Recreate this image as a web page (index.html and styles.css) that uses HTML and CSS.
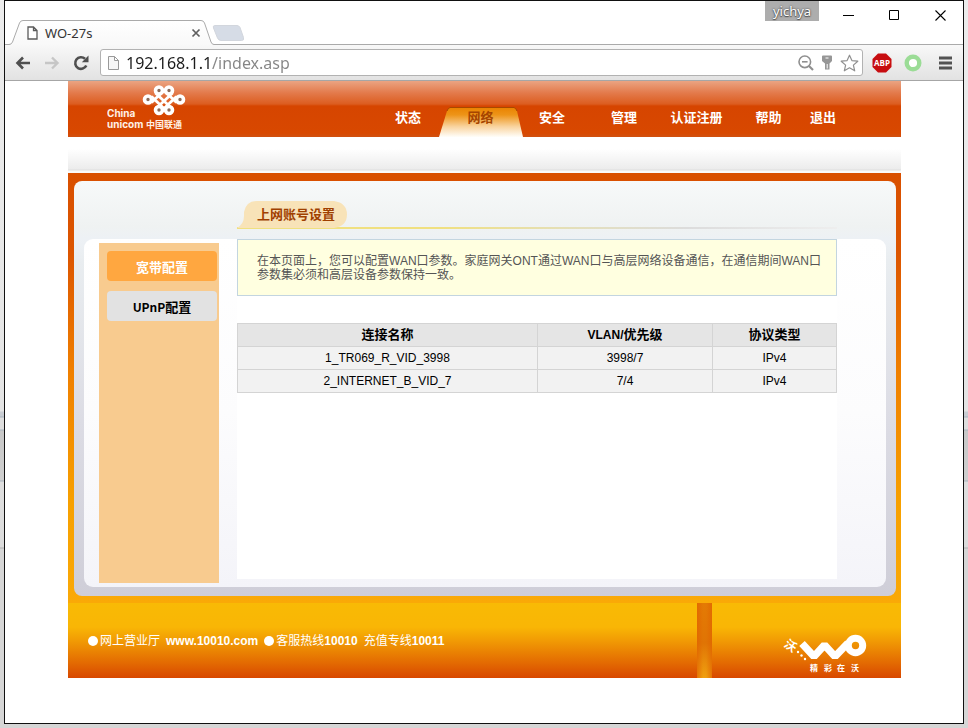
FILE: index.html
```html
<!DOCTYPE html>
<html lang="zh-CN">
<head>
<meta charset="utf-8">
<title>WO-27s</title>
<link rel="stylesheet" href="styles.css">
</head>
<body>
<div class="window">
  <div class="tabstrip">
    <div class="tab">
      <svg class="tab-shape" width="209" height="25" viewBox="0 0 209 25" aria-hidden="true">
        <defs><linearGradient id="tabfill" x1="0" y1="0" x2="0" y2="1"><stop offset="0" stop-color="#fff"/><stop offset="1" stop-color="#f8f8f8"/></linearGradient></defs>
        <path d="M0 24.5H4Q6.500 24.500 7.500 22L14.500 3Q15.500 .5 18 .5H196Q198.500 .5 199.500 3L206 22Q207 24.500 209 24.500V26H0Z" fill="url(#tabfill)"/>
        <path d="M0 24.500H4Q6.500 24.500 7.500 22L14.500 3Q15.500 .5 18 .5H196Q198.500 .5 199.500 3L206 22Q207 24.500 209 24.500" fill="none" stroke="#aaa"/>
      </svg>
      <svg class="tab-page" width="11" height="14" viewBox="0 0 11 14" aria-hidden="true"><path d="M1 1H6.500L10 4.500V13H1ZM6.500 1V4.500H10" fill="#fff" stroke="#5a5a5a" stroke-width="1.300"/></svg>
      <span class="tab-title">WO-27s</span>
      <button class="icon tab-close" aria-label="关闭标签页"><svg width="10" height="10" viewBox="0 0 10 10"><path d="M1.500 1.500 8.500 8.500M8.500 1.500 1.500 8.500" stroke="#5f5f5f" stroke-width="1.700"/></svg></button>
    </div>
    <button class="icon new-tab" aria-label="新标签页"><svg width="33" height="16" viewBox="0 0 33 16"><path d="M3 .5H25Q27 .5 28 2.500L31.500 12.500Q32.500 15.500 29.500 15.500H9Q6.500 15.500 5.500 13L1.500 3Q.5 .5 3 .5Z" fill="#d6dce6" stroke="#d2d6dd"/></svg></button>
    <div class="controls">
      <span class="profile">yichya</span>
      <button class="icon" aria-label="最小化"><svg width="11" height="11" viewBox="0 0 11 11"><path d="M0 5.500H11" stroke="#000"/></svg></button>
      <button class="icon" aria-label="最大化"><svg width="11" height="11" viewBox="0 0 11 11"><path d="M.5 .5H9.500V9.500H.5Z" fill="none" stroke="#000"/></svg></button>
      <button class="icon" aria-label="关闭"><svg width="11" height="11" viewBox="0 0 11 11"><path d="M.5 .5 10.500 10.500M10.500 .5 .5 10.500" stroke="#000" stroke-width="1.100"/></svg></button>
    </div>
  </div>

  <div class="toolbar">
    <div class="history">
      <button class="icon" aria-label="后退"><svg width="16" height="14" viewBox="0 0 16 14"><path d="M15 7H3M8 1.500 2.500 7 8 12.500" fill="none" stroke="#4f4f4f" stroke-width="2.600"/></svg></button>
      <button class="icon" aria-label="前进"><svg width="16" height="14" viewBox="0 0 16 14"><path d="M1 7H13M8 1.500 13.500 7 8 12.500" fill="none" stroke="#c6c6c6" stroke-width="2.400"/></svg></button>
      <button class="icon" aria-label="重新加载"><svg width="16" height="16" viewBox="0 0 16 16"><path d="M13.300 10.500A5.800 5.800 0 1 1 12 3.800" fill="none" stroke="#4f4f4f" stroke-width="2.600"/><path d="M15.500 .5V7.200H8.800Z" fill="#4f4f4f"/></svg></button>
    </div>
    <div class="omnibox">
      <svg width="13" height="16" viewBox="0 0 13 16" aria-hidden="true"><path d="M1.500 1.500H7.500L11.500 5.500V14.500H1.500ZM7.500 1.500V5.500H11.500" fill="#f7f7f7" stroke="#999"/></svg>
      <input class="url" type="text" aria-label="地址" value="192.168.1.1/index.asp">
      <button class="icon" aria-label="缩放"><svg width="16" height="16" viewBox="0 0 16 16"><circle cx="6.800" cy="6.800" r="5.800" fill="none" stroke="#8f8f8f" stroke-width="1.600"/><path d="M4 6.800H9.600" stroke="#8f8f8f" stroke-width="1.600"/><path d="M11 11 15 15" stroke="#8f8f8f" stroke-width="2.200"/></svg></button>
      <button class="icon" aria-label="密码"><svg width="16" height="16" viewBox="0 0 16 16"><path d="M3 1.500Q3 .5 4 .5H12Q13 .5 13 1.500V6L10.500 8.500V14.500H6V8.500L3 6Z" fill="#969696"/><path d="M6.500 3H9.500M8.200 9V13.500" stroke="#fff" stroke-width="1"/></svg></button>
      <button class="icon" aria-label="收藏"><svg width="19" height="18" viewBox="0 0 19 18"><path d="M9.500 1.200 11.900 6.600 17.800 7.200 13.400 11.100 14.700 16.800 9.500 13.800 4.300 16.800 5.600 11.100 1.200 7.200 7.100 6.600Z" fill="#fff" stroke="#909090" stroke-width="1.200" stroke-linejoin="round"/></svg></button>
    </div>
    <button class="icon" aria-label="Adblock Plus"><svg width="20" height="20" viewBox="0 0 20 20"><path d="M6 .5H14L19.500 6V14L14 19.500H6L.5 14V6Z" fill="#c70d10"/><text class="abp" x="10" y="13" text-anchor="middle">ABP</text></svg></button>
    <button class="icon" aria-label="扩展程序"><svg width="18" height="18" viewBox="0 0 18 18"><circle cx="9" cy="9" r="6.300" fill="#fff" stroke="#9bdc96" stroke-width="4.400"/></svg></button>
    <button class="icon menu" aria-label="菜单"><svg width="18" height="14" viewBox="0 0 18 14"><path d="M3 2H16M3 7H16M3 12H16" stroke="#525252" stroke-width="3"/></svg></button>
  </div>

  <div class="viewport">
    <header class="site-header">
      <svg class="unicom" width="84" height="52" viewBox="0 0 84 52" role="img" aria-label="China unicom 中国联通">
        <g fill="#8a6a58" stroke="#fff" stroke-width="3.600">
          <circle cx="52" cy="9.500" r="3.500"/><circle cx="62" cy="9.500" r="3.500"/>
          <circle cx="41" cy="18.500" r="3.500"/><circle cx="73" cy="18.500" r="3.500"/>
          <circle cx="52" cy="29" r="3.500"/><circle cx="62" cy="29" r="3.500"/>
          <path fill="none" stroke-width="2.800" d="M48.500 12 63 25.800M65.500 12 51 25.800M44.500 15.500 57 27.500 69.500 15.500M44.500 21.500 57 9.500 69.500 21.500"/>
        </g>
        <text class="brand" x="0" y="36">China</text>
        <text class="brand" x="0" y="47">unicom</text>
        <text class="brand-cn" x="39" y="47">中国联通</text>
      </svg>
      <nav class="main-nav">
        <a href="#status">状态</a>
        <a href="#network" class="current">
          <svg width="84" height="30" viewBox="0 0 84 30" aria-hidden="true"><defs><linearGradient id="navfill" x1="0" y1="0" x2="0" y2="1"><stop offset="0" stop-color="#ea8200"/><stop offset=".25" stop-color="#ee9418"/><stop offset=".65" stop-color="#f9d4a0"/><stop offset="1" stop-color="#fffefa"/></linearGradient></defs><path d="M0 30 8 4Q9 1 11 .5H75Q77 1 78 4L84 30Z" fill="url(#navfill)"/><path d="M8 4Q9 1 11 .5H75Q77 1 78 4" fill="none" stroke="#a84800"/></svg>
          <span>网络</span></a>
        <a href="#security">安全</a>
        <a href="#manage">管理</a>
        <a href="#register">认证注册</a>
        <a href="#help">帮助</a>
        <a href="#logout">退出</a>
      </nav>
    </header>
    <div class="subnav"></div>
    <main class="panel">
      <div class="frame">
        <div class="heading-row">
          <div class="heading">
            <svg width="110" height="27" viewBox="0 0 110 27" aria-hidden="true"><path d="M0 27Q7 23 7 15V11Q9 0 20 0H97Q110 2 110 13.500 110 25 97 27Z" fill="#f8e3b8"/></svg>
            <h1>上网账号设置</h1>
          </div>
        </div>
        <div class="board">
          <aside class="sidebar">
            <a href="#broadband" class="side-link active">宽带配置</a>
            <a href="#upnp" class="side-link"><span class="latin">UPnP</span>配置</a>
          </aside>
          <section class="content">
            <p class="notice">在本页面上，您可以配置WAN口参数。家庭网关ONT通过WAN口与高层网络设备通信，在通信期间WAN口<br>参数集必须和高层设备参数保持一致。</p>
            <table class="wan">
              <colgroup><col class="c-name"><col class="c-vlan"><col class="c-type"></colgroup>
              <thead><tr><th>连接名称</th><th><span class="latin">VLAN/</span>优先级</th><th>协议类型</th></tr></thead>
              <tbody>
                <tr><td>1_TR069_R_VID_3998</td><td>3998/7</td><td>IPv4</td></tr>
                <tr><td>2_INTERNET_B_VID_7</td><td>7/4</td><td>IPv4</td></tr>
              </tbody>
            </table>
          </section>
        </div>
      </div>
    </main>
    <footer class="site-footer">
      <ul class="service">
        <li>网上营业厅<b class="site">www.10010.com</b></li>
        <li>客服热线<b>10010</b></li>
        <li class="plain">充值专线<b>10011</b></li>
      </ul>
      <div class="pillar"></div>
      <svg class="wo" width="92" height="48" viewBox="-4 -2 92 48" role="img" aria-label="沃 精彩在沃">
        <text class="wo-mark" transform="translate(11 13) rotate(35)" x="-6" y="5">沃</text>
        <g fill="#fff"><circle cx="18" cy="20" r="1.200"/><circle cx="21.500" cy="23.500" r="1.200"/><circle cx="25" cy="27" r="1.200"/></g>
        <path d="M22 11.500 34 24.500 44.500 13 55 24.500 68 11" fill="none" stroke="#fff" stroke-width="7.500" stroke-linejoin="bevel"/>
        <circle cx="75.500" cy="13.500" r="7.200" fill="none" stroke="#fff" stroke-width="7"/>
        <text class="wo-slogan" x="30 44 57 71" y="39">精彩在沃</text>
      </svg>
    </footer>
  </div>
</div>
</body>
</html>
```
FILE: styles.css
```css
* { box-sizing: border-box; }

body {
  margin: 0;
  min-height: 100vh;
  padding: 0 4px 4px;
  display: flex;
  background: linear-gradient(#ececec 0, #e4e4e4 411px, #c9cdd3 412px, #c9cdd3 416px, #a9b4bf 417px, #dedede 418px, #dedede 429px, #a9b4bf 430px, #c8c8c8 431px, #cfcfcf 480px, #a9b4bf 481px, #dedede 482px, #dcdcdc 547px, #b0b0b0 548px, #d6d6d6 549px, #d6d6d6 100%);
  font: 12px/14px "Liberation Sans", "Noto Sans CJK SC", sans-serif;
  color: #000;
}

a { color: inherit; text-decoration: none; }

.window {
  flex: 1;
  display: flex;
  flex-direction: column;
  background: #fff;
  border: 1px solid #111;
}

.icon {
  display: flex;
  align-items: center;
  justify-content: center;
  padding: 0;
  border: 0;
  background: none;
}

/* Tab strip */
.tabstrip {
  display: flex;
  height: 43px;
  padding-top: 19px;
}

.tab {
  position: relative;
  z-index: 1;
  width: 209px;
  height: 25px;
  flex: none;
  display: flex;
  align-items: center;
  gap: 7px;
  padding: 0 13px 0 22px;
}

.tab-shape { position: absolute; left: 0; top: 0; }
.tab-page, .tab-title, .tab-close { position: relative; }
.tab-title { flex: 1; font: 13px/16px "Noto Sans", sans-serif; color: #333; }

.new-tab { height: 16px; margin-top: 5px; margin-left: -2px; }

.controls {
  display: flex;
  align-items: center;
  gap: 35px;
  height: 29px;
  margin: -19px 17px 0 auto;
}

.profile {
  align-self: flex-start;
  width: 54px;
  height: 20px;
  margin-right: -11px;
  background: #adadad;
  color: #fff;
  font: 13px/20px "Noto Sans", sans-serif;
  text-align: center;
  text-shadow: 0 0 2px #333, 0 1px 1px #555;
}

/* Toolbar */
.toolbar {
  display: flex;
  align-items: center;
  gap: 12px;
  height: 37px;
  padding: 0 9px 0 10px;
  border-top: 1px solid #aaa;
  border-bottom: 1px solid #a6a6a6;
  background: linear-gradient(#f8f8f8, #e2e2e2);
}

.history { display: flex; align-items: center; gap: 13px; }

.menu { margin-left: 2px; }

.omnibox {
  flex: 1;
  display: flex;
  align-items: center;
  gap: 5px;
  height: 27px;
  margin: 0 -3px 0 -1px;
  padding: 0 3px 0 6px;
  background: #fff;
  border: 1px solid #b2b2b2;
  border-radius: 3px;
}

.url {
  flex: 1;
  min-width: 0;
  padding: 0 0 0 1px;
  border: 0;
  outline: 0;
  font: 16px/24px "Noto Sans", sans-serif;
  color: transparent;
  background: linear-gradient(90deg, #1c1c1c 86px, #858585 86px);
  background-clip: text;
  -webkit-background-clip: text;
}

.abp { font: bold 8px "Open Sans", sans-serif; fill: #fff; }

/* Page */
.viewport { padding: 0 62px 45px 63px; }

.site-header {
  display: flex;
  align-items: flex-end;
  justify-content: space-between;
  height: 56px;
  padding: 0 65px 0 39px;
  background: linear-gradient(#eba482, #e37a4b 12px, #dc5d20 23px, #d64500 25px, #d84800 52px, #d05010 56px);
}

.unicom { align-self: flex-start; }
.brand { font: bold 10px Inter, sans-serif; fill: #fff1e6; }
.brand-cn { font: bold 9px "Noto Sans CJK SC", sans-serif; fill: #fff1e6; }

.main-nav {
  display: grid;
  grid-template-columns: 62px 83px 60px 84px 61px 83px 26px;
  color: #fff;
  font-size: 13px;
  font-weight: bold;
  line-height: 21px;
  text-align: center;
  white-space: nowrap;
}

.main-nav a { position: relative; height: 30px; }
.main-nav svg { position: absolute; left: 0; top: 0; }
.main-nav span { position: relative; }
.main-nav .current { color: #a64500; }

.subnav {
  height: 36px;
  background: linear-gradient(#fff 0, #fff 12px, #ececec 32px, #dedede 33px, #fafafa 34px, #fafafa 36px);
}

.panel {
  padding: 8px 5px 7px 6px;
  background: linear-gradient(#d95000, #dc5500 80px, #f08000 200px, #f7a000 330px, #faa907);
}

.frame {
  padding-bottom: 9px;
  border-radius: 8px;
  background: linear-gradient(#f7f9f9, #eff2f2 46px, #edf1f5 58px, #e9edf0 80px, #dcdce4 240px, #cfced8);
}

.heading-row {
  height: 58px;
  padding: 20px 59px 0 163px;
}

.heading {
  position: relative;
  height: 28px;
  border-bottom: 2px solid;
  border-image: linear-gradient(90deg, #f0e080 0, #f0e080 34%, #e4dfb8 55%, #dcdcdc 75%, #eee) 1;
}

.heading svg { position: absolute; left: 0; top: 0; }

.heading h1 {
  position: relative;
  margin: 0;
  padding-left: 20px;
  color: #a04000;
  font-size: 13px;
  line-height: 27px;
}

.board {
  display: flex;
  gap: 18px;
  margin: 0 10px;
  padding: 0 49px 0 15px;
  border-radius: 9px;
  background: linear-gradient(#fff, #fcfcfd 50%, #f4f4f9);
}

.sidebar {
  flex: none;
  width: 120px;
  margin: 4px 0;
  padding: 8px 2px 8px 8px;
  background: #f8cb8f;
}

.side-link {
  display: block;
  height: 30px;
  margin-bottom: 10px;
  border-radius: 4px;
  background: #e2e2e2;
  font: bold 13px/31px "Noto Sans CJK SC", sans-serif;
  text-align: center;
}

.side-link.active { background: #ffa740; color: #fff; }

.latin { font-size: 12px; }

.content {
  flex: 1;
  min-height: 340px;
  margin-bottom: 8px;
  background: #fff;
}

.notice {
  margin: 0 0 27px;
  padding: 14px 8px 13px 19px;
  border: 1px solid #c3d5e0;
  background: #ffffe0;
  color: #555;
  white-space: nowrap;
}

.wan {
  width: 100%;
  table-layout: fixed;
  border-collapse: collapse;
  background: #f2f2f2;
  text-align: center;
}

.c-name { width: 300px; }
.c-vlan { width: 175px; }

.wan th, .wan td {
  height: 23px;
  padding: 0;
  border: 1px solid #d4d4d4;
}

.wan th { background: #e5e5e5; font-size: 13px; }

/* Footer */
.site-footer {
  display: flex;
  align-items: center;
  height: 75px;
  padding: 0 33px 0 20px;
  background: linear-gradient(#f9ba05, #f9b605 24px, #f19a04 38px, #e36a02 60px, #d84800);
  color: #fff;
}

.service {
  display: flex;
  flex: 1;
  gap: 6px;
  margin: 0;
  padding: 0;
  list-style: none;
  white-space: nowrap;
}

.service li { display: flex; align-items: center; }
.service .site { margin-left: 6px; }
.service li:not(.plain)::before {
  content: "";
  width: 10px;
  height: 10px;
  margin-right: 2px;
  border-radius: 50%;
  background: #fff;
}

.pillar {
  width: 15px;
  height: 75px;
  margin-right: 64px;
  background: linear-gradient(90deg, rgba(225, 100, 0, .7), rgba(240, 150, 0, 0) 40% 60%, rgba(225, 100, 0, .7)), linear-gradient(#e47a04, #e07404 40px, #f0a010);
}

.wo { margin-top: 27px; }
.wo-mark { font: bold 12px "Noto Sans CJK SC", sans-serif; fill: #fff; }
.wo-slogan { font: bold 8px "Noto Sans CJK SC", sans-serif; fill: #fff; }
```
